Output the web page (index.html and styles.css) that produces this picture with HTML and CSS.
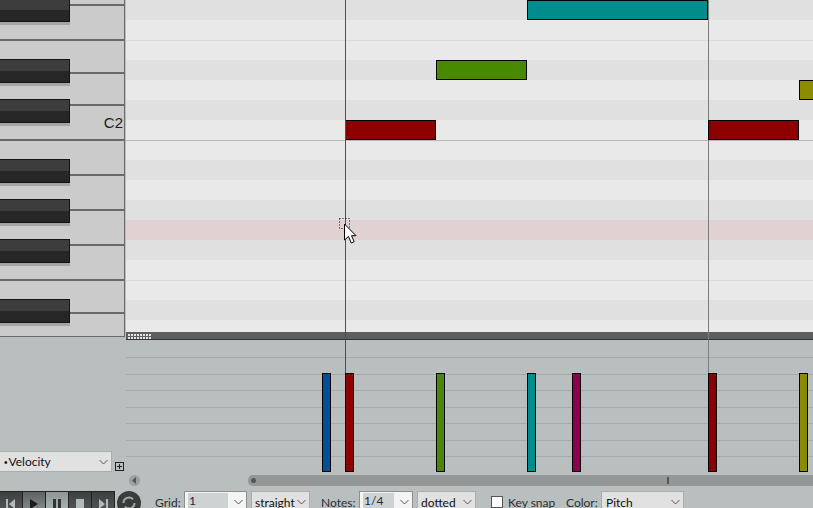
FILE: index.html
```html
<!DOCTYPE html>
<html lang="en">

<head>
    <meta charset="UTF-8">
    <meta name="viewport" content="width=device-width, initial-scale=1.0">
    <title>MIDI Editor</title>
    <link rel="stylesheet" href="styles.css">
</head>

<body>
    <div class="editor">
        <div class="upper">
            <div class="keyboard">
                <div class="key key-top"></div>
                <div class="key"></div>
                <div class="key key-33"></div>
                <div class="key key-32"></div>
                <div class="key"><span class="key-label">C2</span></div>
                <div class="key"></div>
                <div class="key"></div>
                <div class="key"></div>
                <div class="key"></div>
                <div class="key key-33"></div>
                <div class="key key-last"></div>

                <div class="black-key bk-1"></div>
                <div class="black-key bk-2"></div>
                <div class="black-key bk-3"></div>
                <div class="black-key bk-4"></div>
                <div class="black-key bk-5"></div>
                <div class="black-key bk-6"></div>
                <div class="black-key bk-7"></div>
            </div>

            <div class="roll">
                <div class="row dark"></div>
                <div class="row light"></div>
                <div class="row light line"></div>
                <div class="row dark"></div>
                <div class="row light"></div>
                <div class="row dark"></div>
                <div class="row light"></div>
                <div class="row light line-strong"></div>
                <div class="row dark"></div>
                <div class="row light"></div>
                <div class="row dark"></div>
                <div class="row pink"></div>
                <div class="row dark"></div>
                <div class="row light"></div>
                <div class="row light line"></div>
                <div class="row dark"></div>
                <div class="row light row-end"></div>
                <div class="splitter"><div class="grip"></div></div>
            </div>
        </div>

        <div class="lane-wrap">
            <div class="lane-side">
                <div class="select velocity-select">
                    <span><span class="bullet">•</span>Velocity</span>
                    <svg class="chevron" width="9" height="6" viewBox="0 0 9 6"><path d="M.5 1l4 4 4-4" fill="none" stroke="#555"/></svg>
                </div>
                <div class="plus-box"></div>
            </div>
            <div class="lane">
                <div class="lane-line"></div>
                <div class="lane-line"></div>
                <div class="lane-line"></div>
                <div class="lane-line"></div>
                <div class="lane-line"></div>
                <div class="lane-line"></div>
                <div class="lane-line"></div>
            </div>
        </div>

        <div class="edit-line edit-line-grey"></div>

        <div class="note note-teal"></div>
        <div class="note note-green"></div>
        <div class="note note-olive"></div>
        <div class="note note-red-1"></div>
        <div class="note note-red-2"></div>

        <div class="vel vel-blue"></div>
        <div class="vel vel-red-1"></div>
        <div class="vel vel-green"></div>
        <div class="vel vel-teal"></div>
        <div class="vel vel-magenta"></div>
        <div class="vel vel-red-2"></div>
        <div class="vel vel-olive"></div>

        <div class="edit-line edit-line-red"></div>

        <div class="pointer">
            <svg class="drag-box" width="11" height="11" viewBox="0 0 11 11">
                <rect x=".5" y=".5" width="10" height="10" fill="none" stroke="#111" stroke-dasharray="1 2"/>
            </svg>
            <svg class="arrow" width="14" height="22" viewBox="0 0 14 22">
                <path d="M1.500 1v16l4-3.500 2.700 6.500 3-1.300-2.700-6H13z" fill="#fff" stroke="#000"/>
            </svg>
        </div>
    </div>

    <div class="scroll-row">
        <div class="scroll-left">
            <svg width="11" height="11" viewBox="0 0 11 11"><path d="M3 5.500l4-3.500v7z" fill="#555"/></svg>
        </div>
        <div class="scroll-track">
            <div class="scroll-dot"></div>
            <div class="scroll-mark"></div>
        </div>
    </div>

    <div class="toolbar">
        <div class="transport">
            <div class="t-btn">
                <svg width="10" height="12" viewBox="0 0 10 12"><path d="M0 1h2v10H0zM9 1v10L3 6z" fill="#b4baba"/></svg>
            </div>
            <div class="t-btn t-play">
                <svg width="10" height="12" viewBox="0 0 10 12"><path d="M1 1v10l8-5z" fill="#1c1c1c"/></svg>
            </div>
            <div class="t-btn t-pause">
                <svg width="8" height="12" viewBox="0 0 8 12"><path d="M0 1h3v10H0zM5 1h3v10H5z" fill="#333"/></svg>
            </div>
            <div class="t-btn">
                <svg width="10" height="12" viewBox="0 0 10 12"><path d="M1 1h8v9H1z" fill="#b4baba"/></svg>
            </div>
            <div class="t-btn">
                <svg width="10" height="12" viewBox="0 0 10 12"><path d="M1 1v10l6-5zM8 1h2v10H8z" fill="#b4baba"/></svg>
            </div>
            <div class="t-loop">
                <svg width="24" height="24" viewBox="0 0 24 24">
                    <circle cx="12" cy="12" r="12" fill="#3b3d3d"/>
                    <path d="M6.500 12a5.500 5.500 0 0 1 9.500-3.800M17.500 12a5.500 5.500 0 0 1-9.500 3.800" fill="none" stroke="#a4aaaa" stroke-width="2"/>
                </svg>
            </div>
        </div>

        <span class="label label-grid">Grid:</span>
        <div class="select combo combo-grid">
            <span class="combo-text">1</span>
            <svg class="chevron" width="9" height="6" viewBox="0 0 9 6"><path d="M.5 1l4 4 4-4" fill="none" stroke="#555"/></svg>
        </div>
        <div class="select select-straight">
            <span>straight</span>
            <svg class="chevron" width="9" height="6" viewBox="0 0 9 6"><path d="M.5 1l4 4 4-4" fill="none" stroke="#555"/></svg>
        </div>

        <span class="label label-notes">Notes:</span>
        <div class="select combo combo-notes">
            <span class="combo-text">1/4</span>
            <svg class="chevron" width="9" height="6" viewBox="0 0 9 6"><path d="M.5 1l4 4 4-4" fill="none" stroke="#555"/></svg>
        </div>
        <div class="select select-dotted">
            <span>dotted</span>
            <svg class="chevron" width="9" height="6" viewBox="0 0 9 6"><path d="M.5 1l4 4 4-4" fill="none" stroke="#555"/></svg>
        </div>

        <div class="checkbox"></div>
        <span class="label label-snap">Key snap</span>
        <span class="label label-color">Color:</span>
        <div class="select select-pitch">
            <span>Pitch</span>
            <svg class="chevron" width="9" height="6" viewBox="0 0 9 6"><path d="M.5 1l4 4 4-4" fill="none" stroke="#555"/></svg>
        </div>
    </div>
</body>

</html>
```

FILE: styles.css
```css
* {
    box-sizing: border-box;
}

html,
body {
    margin: 0;
    height: 508px;
    overflow: hidden;
}

body {
    font-family: Lato, "Open Sans", Arial, sans-serif;
    font-size: 12px;
    color: #2a2e33;
    background-color: #b9bfbf;
}

.editor {
    position: relative;
}

.upper {
    display: flex;
    height: 340px;
}

/* keyboard */

.keyboard {
    position: relative;
    flex: none;
    width: 125px;
    height: 337px;
    border-right: 1px solid #6a6a6a;
    background-color: #cbcbcb;
}

.key {
    display: flex;
    align-items: flex-end;
    justify-content: flex-end;
    height: 35px;
    border-bottom: 2px solid #696969;
}

.key-top {
    height: 6px;
}

.key-33 {
    height: 33px;
}

.key-32 {
    height: 32px;
}

.key-last {
    height: 23px;
    border-bottom-width: 1px;
}

.key-label {
    font-family: "Liberation Sans", Arial, sans-serif;
    font-size: 15px;
    line-height: 17px;
    color: #1a1d24;
    margin-bottom: 8px;
    margin-right: 1px;
}

.black-key {
    position: absolute;
    left: -2px;
    width: 72px;
    height: 24px;
    border: 1px solid #141414;
    background: linear-gradient(#3d3d3d 50%, #272727 50%);
    box-shadow: 0 3px 0 #a5a5a5;
}

.bk-1 { top: -2px; }
.bk-2 { top: 59px; }
.bk-3 { top: 99px; }
.bk-4 { top: 159px; }
.bk-5 { top: 199px; }
.bk-6 { top: 239px; }
.bk-7 { top: 299px; }

/* piano roll */

.roll {
    display: flex;
    flex-direction: column;
    flex: 1;
    margin-left: 1px;
}

.row {
    flex: none;
    height: 20px;
}

.row-end {
    height: 12px;
}

.dark {
    background-color: #e0e0e0;
}

.light {
    background-color: #e9e9e9;
}

.pink {
    background-color: #e0d2d2;
}

.line {
    border-top: 1px solid #dadada;
}

.line-strong {
    border-top: 1px solid #b6b8b8;
}

.splitter {
    flex: none;
    height: 8px;
    padding: 2px 0 0 2px;
    background-color: #5b5f5f;
    border-bottom: 1px solid #333;
}

.grip {
    width: 24px;
    height: 5px;
    background-image: linear-gradient(#e4e4e4 2px, transparent 2px);
    background-size: 3px 3px;
    -webkit-mask-image: linear-gradient(90deg, #000 2px, transparent 2px);
    -webkit-mask-size: 3px 3px;
}

.note {
    position: absolute;
    height: 20px;
    border: 1px solid #000;
}

.note-teal {
    top: 0;
    left: 527px;
    width: 181px;
    background-color: #008c8c;
}

.note-green {
    top: 60px;
    left: 436px;
    width: 91px;
    background-color: #478a00;
}

.note-olive {
    top: 80px;
    left: 799px;
    width: 40px;
    background-color: #8c8c00;
}

.note-red-1 {
    top: 120px;
    left: 345px;
    width: 91px;
    background-color: #8b0000;
}

.note-red-2 {
    top: 120px;
    left: 708px;
    width: 91px;
    background-color: #8b0000;
}

/* velocity lane */

.lane-wrap {
    display: flex;
    height: 133px;
}

.lane-side {
    display: flex;
    align-items: flex-end;
    flex: none;
    width: 126px;
    padding-bottom: 1px;
}

.lane {
    flex: 1;
    padding-top: 17px;
}

.lane-line {
    height: 16.5px;
    border-top: 1px solid #a5abab;
}

.vel {
    position: absolute;
    top: 373px;
    width: 9px;
    height: 99px;
    border: 1px solid #000;
}

.vel-blue { left: 322px; background-color: #004f99; }
.vel-red-1 { left: 345px; background-color: #8b0000; }
.vel-green { left: 436px; background-color: #478a00; }
.vel-teal { left: 527px; background-color: #008c8c; }
.vel-magenta { left: 572px; background-color: #8c0050; }
.vel-red-2 { left: 708px; background-color: #8b0000; }
.vel-olive { left: 799px; background-color: #8c8c00; }

.edit-line {
    position: absolute;
    top: 0;
    width: 1px;
    height: 373px;
}

.edit-line-red {
    left: 345px;
    background-color: #9a2c32;
}

.edit-line-grey {
    left: 708px;
    background-color: #7c7c7c;
}

.pointer {
    position: absolute;
    left: 339px;
    top: 218px;
}

.drag-box {
    display: block;
}

.arrow {
    position: absolute;
    left: 4px;
    top: 5px;
}

/* dropdowns */

.select {
    display: flex;
    align-items: center;
    justify-content: space-between;
    flex: none;
    height: 22px;
    padding: 0 3px 0 3px;
    background-color: #e1e1e1;
    border: 1px solid #adadad;
    color: #111;
}

.chevron {
    flex: none;
}

.velocity-select {
    width: 113px;
    height: 21px;
    margin-left: -1px;
    padding-left: 4px;
}

.bullet {
    font-family: "Liberation Sans", Arial, sans-serif;
    font-size: 10px;
    margin-right: 1px;
}

.plus-box {
    width: 9px;
    height: 9px;
    margin: 0 0 1px 3px;
    border: 1px solid #222;
    background:
        linear-gradient(#222, #222) center / 5px 1px no-repeat,
        linear-gradient(#222, #222) center / 1px 5px no-repeat;
}

/* scrollbar */

.scroll-row {
    display: flex;
    height: 11px;
    margin-top: 2px;
    padding-left: 129px;
}

.scroll-left {
    width: 11px;
    height: 11px;
    border-radius: 50%;
    background-color: #9ba0a0;
}

.scroll-left svg {
    display: block;
}

.scroll-track {
    position: relative;
    flex: 1;
    margin-left: 108px;
    border-radius: 5px 0 0 5px;
    background-color: #939797;
}

.scroll-dot {
    position: absolute;
    left: 3px;
    top: 3px;
    width: 5px;
    height: 5px;
    border-radius: 50%;
    background-color: #555;
}

.scroll-mark {
    position: absolute;
    left: 419px;
    top: 2px;
    width: 2px;
    height: 7px;
    background-color: #555;
}

/* bottom toolbar */

.toolbar {
    display: flex;
    align-items: flex-start;
    margin-top: 5px;
}

.transport {
    display: flex;
    flex: none;
    width: 155px;
}

.t-btn {
    display: flex;
    justify-content: center;
    flex: none;
    width: 23px;
    height: 24px;
    padding-top: 6px;
    background: linear-gradient(#3f4141, #565a5a);
    border-top: 1px solid #222;
    border-right: 1px solid #222;
}

.t-play {
    background: linear-gradient(#5d6363, #8d9696);
}

.t-pause {
    background: linear-gradient(#8e9696, #b2b9b9);
}

.t-loop {
    margin-left: 2px;
}

.label {
    flex: none;
    line-height: 22px;
    margin-top: 1px;
}

.label-grid {
    width: 29px;
}

.combo {
    padding-left: 3px;
    background-color: #f4f4f4;
    border-color: #8f8f8f;
}

.combo-text {
    width: 40px;
    height: 18px;
    padding-left: 1px;
    line-height: 16px;
    background-color: #cfd2d2;
    color: #222a40;
}

.combo-grid {
    width: 63px;
}

.combo-notes {
    width: 54px;
}

.combo-notes .combo-text {
    width: 31px;
}

.select-straight {
    width: 59px;
    margin-left: 4px;
}

.label-notes {
    width: 38px;
    margin-left: 11px;
}

.select-dotted {
    width: 59px;
    margin-left: 4px;
}

.checkbox {
    flex: none;
    width: 12px;
    height: 12px;
    margin: 5px 5px 0 15px;
    background-color: #fff;
    border: 1px solid #555;
}

.label-snap {
    width: 58px;
}

.label-color {
    width: 35px;
}

.select-pitch {
    width: 83px;
    padding-left: 4px;
}
```
